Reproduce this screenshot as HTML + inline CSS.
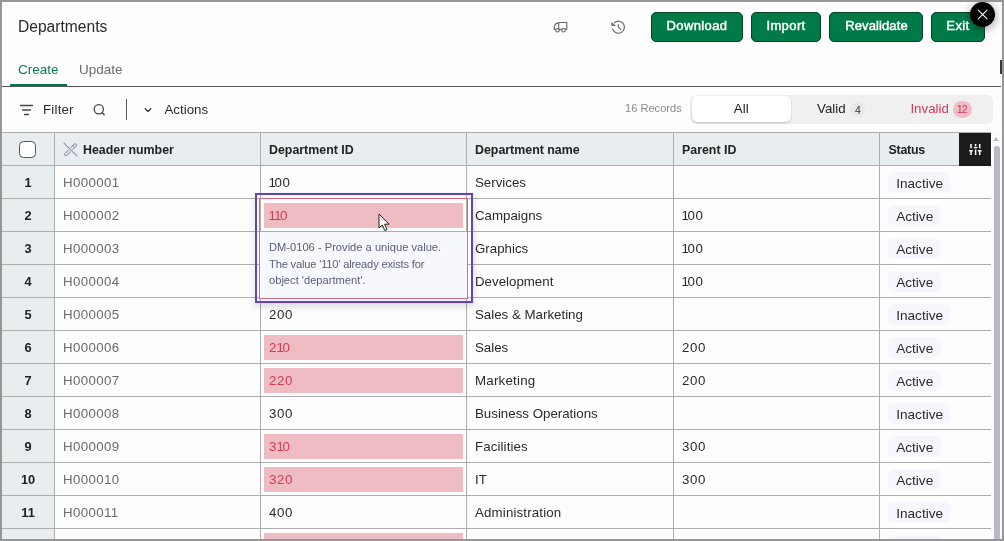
<!DOCTYPE html>
<html>
<head>
<meta charset="utf-8">
<title>Departments</title>
<style>
*{box-sizing:border-box;margin:0;padding:0}
html,body{width:1004px;height:541px;overflow:hidden;background:#fdfdfd}
body{font-family:"Liberation Sans",sans-serif;color:#2b2b2b;position:relative}
.abs{position:absolute}
.frame{position:absolute;left:0;top:0;width:1004px;height:541px;border:2px solid #969696;border-right-width:2.5px;pointer-events:none;z-index:50}
.title{left:18px;top:18px;font-size:15.6px;line-height:18px;color:#2b2b2b}
.tab{top:61.5px;font-size:13.5px;line-height:16px}
.btn{top:12px;height:30px;background:#007a47;border:1px solid #0a3d26;border-radius:5px;color:#fff;font-size:13px;line-height:26.6px;text-align:center;letter-spacing:0.4px;-webkit-text-stroke:0.45px #fff}
.hline{left:2px;top:86px;width:999px;height:1px;background:#555}
.tb{top:101px;font-size:13.3px;line-height:17px;color:#2b2b2b}
/* table */
.grid{left:2px;top:132px;width:989px;height:407px;overflow:hidden}
.row{position:absolute;left:0;width:990px;height:33px;border-top:1px solid #adadad}
.row.hd{background:#e8edf0}
.c{position:absolute;top:0;height:32px;border-left:1px solid #adadad;font-size:13.3px;line-height:33px;white-space:nowrap}
.c0{left:0;width:52px;border-left:none;background:#e8edf0;text-align:center;font-weight:bold;font-size:12.8px;line-height:34.6px;color:#222}
.c1{left:52px;width:206px;padding-left:8px;color:#6b6b6b;letter-spacing:0.35px}
.c2{left:258px;width:206px;padding-left:8px}
.c3{left:464px;width:207px;padding-left:8px}
.c4{left:671px;width:206px;padding-left:8px}
.c5{left:877px;width:113px;padding-left:8px}
.hd .c{letter-spacing:0;font-weight:bold;font-size:12.4px;line-height:34px;color:#222;background:#e8edf0}
.err{position:absolute;left:2.6px;top:3.5px;width:199.6px;height:25px;background:#efbcc4;color:#d23b55;padding-left:5.4px;line-height:25px}
.pill{position:absolute;left:8.4px;top:6.3px;background:#f6f7fc;border-radius:6px;height:20.3px;line-height:23.3px;padding:0 8.2px 0 7.8px;font-size:13.6px}
.n1{letter-spacing:-1.4px;margin-left:-0.5px}
.num{letter-spacing:0.65px}
.cb{display:inline-block;width:17px;height:17px;border:1.5px solid #555;border-radius:4.5px;background:#fff;vertical-align:middle;position:relative;top:-1px;left:-0.5px}
</style>
</head>
<body>
<div id="wrap" style="position:absolute;left:0;top:0;width:1004px;height:541px;will-change:transform">
<div class="abs title">Departments</div>
<div class="abs tab" style="left:18px;color:#0a7d4b">Create</div>
<div class="abs tab" style="left:79px;color:#6b6b6b">Update</div>
<div class="abs" style="left:10px;top:83.6px;width:57px;height:2.6px;background:#007a47"></div>
<div class="abs hline"></div>

<div class="abs btn" style="left:651px;width:92px">Download</div>
<div class="abs btn" style="left:751px;width:70px">Import</div>
<div class="abs btn" style="left:829px;width:94px;letter-spacing:0.1px;padding-left:1px">Revalidate</div>
<div class="abs btn" style="left:931px;width:54px">Exit</div>

<!-- header icons -->
<svg class="abs" style="left:550px;top:18px" width="20" height="18" viewBox="0 0 20 18" fill="none" stroke="#6a6a6a" stroke-width="1.15" stroke-linecap="round" stroke-linejoin="round">
<path d="M8.7 11.3V4.5H16.8V11.3H15.3M11.7 11.3H9.3M8.7 4.9C6 5.2 4.3 7.2 4.3 9.6V11.3H5.7"/>
<circle cx="7.5" cy="12.2" r="1.75"/><circle cx="13.5" cy="12.2" r="1.75"/>
</svg>
<svg class="abs" style="left:603px;top:14px" width="30" height="26" viewBox="0 0 30 26" fill="none" stroke="#6a6a6a" stroke-width="1.15" stroke-linecap="round" stroke-linejoin="round">
<path d="M11.2 8.9A6 6 0 1 1 9.7 15.1"/><path d="M9 8.7V11.3H12" fill="#6a6a6a"/><path d="M15.4 10.5V13.2L17.8 15.6"/>
</svg>

<!-- close circle -->
<div class="abs" style="left:969.7px;top:1.7px;width:25.5px;height:25.5px;border-radius:50%;background:#000;box-shadow:0 2px 8px 1px rgba(0,0,0,.33);z-index:40"></div>
<svg class="abs" style="left:969.8px;top:2px;z-index:61" width="25" height="25" viewBox="0 0 25 25" stroke="#fff" stroke-width="1.05" stroke-linecap="round"><path d="M8.2 8.1L17 16.9M17 8.1L8.2 16.9"/></svg>

<!-- toolbar -->
<svg class="abs" style="left:18px;top:102px" width="16" height="16" viewBox="0 0 16 16" stroke="#444" stroke-width="1.3" stroke-linecap="round"><path d="M2.5 3.5H14.5M4.5 8H12.5M6.5 12.5H10.5"/></svg>
<div class="abs tb" style="left:43px;letter-spacing:0.2px">Filter</div>
<svg class="abs" style="left:91px;top:102px" width="16" height="16" viewBox="0 0 16 16" fill="none" stroke="#444" stroke-width="1.3" stroke-linecap="round"><circle cx="7.8" cy="7.3" r="4.6"/><path d="M11.2 10.8L13.2 12.8"/></svg>
<div class="abs" style="left:126px;top:99px;width:1px;height:21px;background:#555"></div>
<svg class="abs" style="left:143px;top:105px" width="10" height="10" viewBox="0 0 10 10" fill="none" stroke="#333" stroke-width="1.3" stroke-linecap="round" stroke-linejoin="round"><path d="M2.2 3.8L5 6.4L7.8 3.8"/></svg>
<div class="abs tb" style="left:164.5px">Actions</div>

<div class="abs" style="left:625px;top:100.5px;font-size:11.1px;line-height:14px;color:#8a8a8a">16 Records</div>
<div class="abs" style="left:690px;top:95px;width:303px;height:29px;border-radius:6px;background:#f0f0f1"></div>
<div class="abs" style="left:691.5px;top:96.4px;width:99.5px;height:25.5px;border-radius:5px;background:#fff;box-shadow:0 1px 2px rgba(0,0,0,.22);font-size:13.3px;line-height:26px;text-align:center;color:#222">All</div>
<div class="abs" style="left:817px;top:100.3px;font-size:13.3px;line-height:17px;color:#222">Valid</div>
<div class="abs" style="left:850.3px;top:101.5px;width:15px;height:15.4px;border-radius:8px;background:#e8e8e9;font-size:10.5px;line-height:16px;text-align:center;color:#333">4</div>
<div class="abs" style="left:910.4px;top:100.3px;font-size:13.3px;line-height:17px;color:#d23b55">Invalid</div>
<div class="abs" style="left:952.6px;top:100.7px;width:19.8px;height:17px;border-radius:9px;background:#f1bcc5;font-size:10.8px;line-height:17.5px;text-align:center;color:#c63e57;letter-spacing:0.3px"><span style="letter-spacing:-1px;margin-left:-0.3px">1</span>2</div>

<!-- grid -->
<div class="abs grid">
<div class="row hd" style="top:0"><div class="c c0"><span class="cb"></span></div><div class="c c1" style="padding-left:28px">Header number<svg style="position:absolute;left:7.2px;top:9.1px" width="18" height="16" viewBox="0 0 18 16" fill="none" stroke-linecap="round" stroke-linejoin="round"><path d="M13.3 3.1L3.8 12.4" stroke="#8a90aa" stroke-width="3.5"/><path d="M13.3 3.1L3.8 12.4" stroke="#e8edf0" stroke-width="1.5"/><path d="M10.6 3.4L13 5.8" stroke="#8a90aa" stroke-width="0.9"/><path d="M4.6 3.7L12.4 11.4" stroke="#e8edf0" stroke-width="2.7" stroke-linecap="butt"/><path d="M2 1.2L14.9 13.8" stroke="#8a90aa" stroke-width="1.1"/></svg></div><div class="c c2">Department ID</div><div class="c c3">Department name</div><div class="c c4">Parent ID</div><div class="c c5" style="letter-spacing:-0.25px;padding-left:8.5px">Status</div>
<div style="position:absolute;left:957px;top:0;width:32px;height:33px;background:#1c1c1c;z-index:2"></div>
<svg style="position:absolute;left:957px;top:0;z-index:3" width="32" height="33" viewBox="0 0 32 33" stroke="#fff" stroke-width="1.5" fill="none"><path d="M12 11V15.3M12 17.2V22M16.6 11V13.2M16.6 16.4V22M20.7 11V15.3M20.7 17.2V22"/><path d="M10.2 17.8H13.8M14.8 14.6H18.4M18.9 17.8H22.5" stroke-width="1.4"/></svg>
</div>
<div class="row" style="top:33px"><div class="c c0">1</div><div class="c c1">H000001</div><div class="c c2"><span class="num"><span class="n1">1</span>00</span></div><div class="c c3">Services</div><div class="c c4"></div><div class="c c5"><span class="pill">Inactive</span></div></div>
<div class="row" style="top:66px"><div class="c c0">2</div><div class="c c1">H000002</div><div class="c c2"><div class="err"><span class="num"><span class="n1">1</span><span class="n1">1</span>0</span></div></div><div class="c c3">Campaigns</div><div class="c c4"><span class="num"><span class="n1">1</span>00</span></div><div class="c c5"><span class="pill">Active</span></div></div>
<div class="row" style="top:99px"><div class="c c0">3</div><div class="c c1">H000003</div><div class="c c2"></div><div class="c c3">Graphics</div><div class="c c4"><span class="num"><span class="n1">1</span>00</span></div><div class="c c5"><span class="pill">Active</span></div></div>
<div class="row" style="top:132px"><div class="c c0">4</div><div class="c c1">H000004</div><div class="c c2"></div><div class="c c3">Development</div><div class="c c4"><span class="num"><span class="n1">1</span>00</span></div><div class="c c5"><span class="pill">Active</span></div></div>
<div class="row" style="top:165px"><div class="c c0">5</div><div class="c c1">H000005</div><div class="c c2"><span class="num">200</span></div><div class="c c3">Sales &amp; Marketing</div><div class="c c4"></div><div class="c c5"><span class="pill">Inactive</span></div></div>
<div class="row" style="top:198px"><div class="c c0">6</div><div class="c c1">H000006</div><div class="c c2"><div class="err"><span class="num">2<span class="n1">1</span>0</span></div></div><div class="c c3">Sales</div><div class="c c4"><span class="num">200</span></div><div class="c c5"><span class="pill">Active</span></div></div>
<div class="row" style="top:231px"><div class="c c0">7</div><div class="c c1">H000007</div><div class="c c2"><div class="err"><span class="num">220</span></div></div><div class="c c3"><span style="letter-spacing:0.22px">Marketing</span></div><div class="c c4"><span class="num">200</span></div><div class="c c5"><span class="pill">Active</span></div></div>
<div class="row" style="top:264px"><div class="c c0">8</div><div class="c c1">H000008</div><div class="c c2"><span class="num">300</span></div><div class="c c3">Business Operations</div><div class="c c4"></div><div class="c c5"><span class="pill">Inactive</span></div></div>
<div class="row" style="top:297px"><div class="c c0">9</div><div class="c c1">H000009</div><div class="c c2"><div class="err"><span class="num">3<span class="n1">1</span>0</span></div></div><div class="c c3"><span style="letter-spacing:0.1px">Facilities</span></div><div class="c c4"><span class="num">300</span></div><div class="c c5"><span class="pill">Active</span></div></div>
<div class="row" style="top:330px"><div class="c c0">10</div><div class="c c1">H000010</div><div class="c c2"><div class="err"><span class="num">320</span></div></div><div class="c c3">IT</div><div class="c c4"><span class="num">300</span></div><div class="c c5"><span class="pill">Active</span></div></div>
<div class="row" style="top:363px"><div class="c c0">11</div><div class="c c1">H000011</div><div class="c c2"><span class="num">400</span></div><div class="c c3"><span style="letter-spacing:0.15px">Administration</span></div><div class="c c4"></div><div class="c c5"><span class="pill">Inactive</span></div></div>
<div class="row" style="top:396px"><div class="c c0"></div><div class="c c1"></div><div class="c c2"><div class="err"></div></div><div class="c c3"></div><div class="c c4"></div><div class="c c5"><span class="pill">Active</span></div></div>
</div>

<!-- scrollbar -->
<div class="abs" style="left:992px;top:133px;width:9px;height:406px;background:#fbfbfb"></div>
<div class="abs" style="left:994.3px;top:145.5px;width:5.5px;height:400px;border-radius:3px;background:#b7b9c9"></div>
<div class="abs" style="left:993.1px;top:136.5px;width:0;height:0;border-left:3.6px solid transparent;border-right:3.6px solid transparent;border-bottom:4.8px solid #b9bbcd"></div>

<!-- tooltip -->
<div class="abs" style="left:255px;top:193px;width:218px;height:110px;border:2px solid #6340c8;box-shadow:0 4px 7px rgba(0,0,0,.13);z-index:8"></div>
<div class="abs" style="left:259.3px;top:198px;width:208.6px;height:101px;border:1px solid #e0667b;z-index:8"></div>
<div class="abs" style="left:260px;top:232px;width:207px;height:66px;background:#f7f8fd;z-index:7;font-size:11.15px;line-height:16.5px;color:#5c6078;padding:7.1px 0 0 9px">DM-0106 - Provide a unique value.<br><span style="letter-spacing:-0.18px">The value '110' already exists for</span><br>object 'department'.</div>
<svg class="abs" style="left:377.7px;top:213.2px;z-index:9" width="14" height="20" viewBox="0 0 14 20"><path d="M1 1V15L4.3 12L6.8 17.6L9 16.6L6.6 11.2H11Z" fill="#fff" stroke="#222" stroke-width="1"/></svg>


<div class="abs" style="left:1000.4px;top:59.5px;width:1.3px;height:14px;background:#3a3a3a;z-index:45"></div>
<div class="frame"></div>
</div>
</body>
</html>
